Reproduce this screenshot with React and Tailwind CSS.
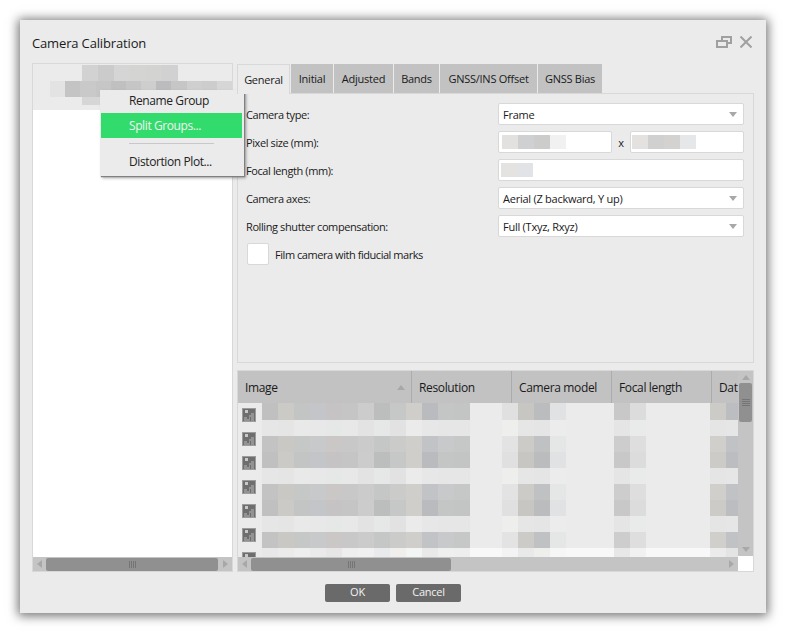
import React from 'react';

const fontStack = "font-['Open_Sans',sans-serif]";

// mosaic colours, one entry per 16px cell, null = blank
const darkA = ['#c0c0c0','#cbcac7','#c3c5c4','#c4c5c8','#c5c3c3','#c5c5c5','#cccccc','#bcbebd','#c6c7c7','#cfcecb','#babbbe','#c4c6c6','#c3c5c5',null,null,'#e0e0e0','#c8c6c3','#bbbcbe','#e0e2e4',null,null,null,'#c8c8c8','#dcdcdc',null,null,null,null,'#cccbc8','#bbbdc0'];
const darkB = ['#c3c3c3','#cac8c5','#c6c8c7','#c8c9cb','#cbc7c7','#c8c8c8','#cbcbcb','#c5c7c6','#cbcbc9','#cfcecb','#c2c3c6','#c7c9ca','#c6c8c8',null,null,'#e3e3e3','#cdcbc8','#bfc1c3','#e5e7e7',null,null,null,'#cdcdcd','#dedede',null,null,null,null,'#d0cfcc','#c0c2c5'];
const light = ['#e6e6e6','#e5e5e5','#e9e9e9','#e8e8e8','#e6e8e8','#e8e8e8','#e3e3e3','#e6e8e8','#e2e2e2','#ebebeb','#e7e7e7','#e6e6e6','#e6e6e6',null,null,'#eeeeec','#e6e6e6','#e5e5e5','#ececec',null,null,null,'#e5e5e5','#e9ebeb',null,null,null,null,'#e5e5e5','#e6e6e6'];
const lastRow = ['#e8e8e8','#ebebeb','#eeeeee','#eaeaea','#e6e6e6','#eeeeee','#f0f0f0','#e8eaec','#f0efed','#f2f5f3','#e9e9e9','#efefef','#eeeeee',null,null,'#f3f3f3','#e9e9e9','#eeeeec','#f6f6f6',null,null,null,'#e7e7e7','#f1f1f1',null,null,null,null,'#ebebeb','#e4e4e4'];

const rows = [
  [darkA, 17], [light, 16], [darkB, 16], [darkA, 16], [light, 16],
  [darkB, 16], [darkA, 16], [light, 16], [darkB, 16], [lastRow, 9],
];

function Arrow({ dir, className = '' }) {
  const pts = { up: '0,5 4,0 8,5', down: '0,0 8,0 4,5', left: '5,0 5,8 0,4', right: '0,0 0,8 5,4' }[dir];
  const vertical = dir === 'up' || dir === 'down';
  return (
    <svg width={vertical ? 8 : 5} height={vertical ? 5 : 8} className={className}>
      <polygon points={pts} fill="#a8a8a8" />
    </svg>
  );
}

function Grip({ vertical }) {
  return (
    <div className={vertical ? 'flex flex-col gap-[1px]' : 'flex gap-[1px]'}>
      {[0, 1, 2, 3].map((i) => (
        <div key={i} className={vertical ? 'w-[8px] h-[1px] bg-[#757575]' : 'w-[1px] h-[7px] bg-[#757575]'} />
      ))}
    </div>
  );
}

function ImageIcon() {
  return (
    <svg width="14" height="14" viewBox="0 0 14 14" className="block">
      <rect width="14" height="14" fill="#9c9c9c" />
      <rect x="1" y="1" width="12" height="12" fill="#6e6e6e" />
      <rect x="3" y="2" width="3" height="3" fill="#c8c8c8" />
      <path d="M2 13 V9 H5 V11 H7 V7 H9 V5 H12 V13 H9 V9 H8 V13 Z" fill="#939393" />
    </svg>
  );
}

function Select({ value }) {
  return (
    <div className="w-[246px] h-[22px] bg-white border border-[#d8d8d8] rounded-[2px] flex items-center justify-between pl-[4px] pr-[6px]">
      <span className="pt-[2px]">{value}</span>
      <Arrow dir="down" />
    </div>
  );
}

function Blur({ cells, pad = 'pl-[3px]' }) {
  return (
    <div className={`${pad} flex`}>
      {cells.map((c, i) => (
        <div key={i} className="w-[16px] h-[14px]" style={{ backgroundColor: c }} />
      ))}
    </div>
  );
}

function FormRow({ label, children }) {
  return (
    <div className="flex items-center h-[22px]">
      <div className="w-[252px] shrink-0 pt-[2px] tracking-[-0.4px]">{label}</div>
      {children}
    </div>
  );
}

function ContextMenu() {
  return (
    <div className="absolute left-[67px] top-[26px] w-[144px] h-[86px] bg-[#ebebeb] text-[#222] text-[12px] tracking-[-0.4px] shadow-[1px_1px_1px_#808080,2px_2px_3px_rgba(0,0,0,0.35)] pl-[1px] pr-[2px]">
      <div className="h-[23px] pl-[28px] pb-[2px] flex items-center">Rename Group</div>
      <div className="h-[25px] pl-[28px] pt-[1px] flex items-center bg-[#32dc6c] text-[#f2f2f2]">Split Groups...</div>
      <div className="h-[10px] flex items-center pl-[28px]"><div className="w-[85px] h-[1px] bg-[#c8c8c8]" /></div>
      <div className="h-[25px] pl-[28px] pt-[3px] flex items-center">Distortion Plot...</div>
    </div>
  );
}

const tabs = [
  ['General', 'w-[53px]'],
  ['Initial', 'w-[42px]'],
  ['Adjusted', 'w-[59px]'],
  ['Bands', 'w-[45px]'],
  ['GNSS/INS Offset', 'w-[97px]'],
  ['GNSS Bias', 'w-[64px]'],
];

const columns = [
  ['Image', 'w-[174px]'],
  ['Resolution', 'w-[100px]'],
  ['Camera model', 'w-[100px]'],
  ['Focal length', 'w-[100px]'],
  ['Dat', 'w-[26px]'],
];

export default function App() {
  return (
    <div className={`w-[786px] h-[632px] bg-white pt-[20px] pl-[20px] overflow-hidden text-[11px] tracking-[-0.25px] text-[#1a1a1a] ${fontStack}`}>
      <div className="w-[746px] h-[593px] bg-[#ebebeb] flex flex-col shadow-[0_1px_10px_2px_rgba(0,0,0,0.55)]">
        {/* title bar */}
        <div className="h-[43px] shrink-0 flex items-center justify-between pl-[12px] pr-[14px] pt-[3px]">
          <span className="text-[13px] tracking-[-0.15px] pt-[2px]">Camera Calibration</span>
          <div className="flex items-center gap-[8px] -mt-[2px]">
            <svg width="16" height="12" viewBox="0 0 16 12" fill="none" stroke="#a0a0a0" strokeWidth="2">
              <rect x="1" y="5" width="10" height="6" />
              <path d="M6 4 V1 H15 V7 H12" />
            </svg>
            <svg width="12" height="12" viewBox="0 0 12 12" stroke="#a0a0a0" strokeWidth="2">
              <path d="M0.5 0.5 L11.5 11.5 M11.5 0.5 L0.5 11.5" />
            </svg>
          </div>
        </div>

        <div className="flex gap-[4px] pl-[12px] h-[509px] shrink-0">
          {/* group list */}
          <div className="relative w-[201px] border border-[#d8d8d8] flex flex-col">
            <div className="h-[46px] shrink-0 bg-[#ebebeb] pt-[1px] overflow-hidden">
              <div className="flex pl-[49px]">
                {['#d2d2d2','#cbcbcb','#d4d5d4','#d4d4d2','#d3d3d1','#d1d1d1'].map((c, i) => (
                  <div key={i} className="w-[16px] h-[16px]" style={{ backgroundColor: c }} />
                ))}
              </div>
              <div className="flex pl-[17px]">
                {['#e3e3e3','#c4c4c4','#c9c9c9','#c6c6c6','#c0c0c0','#c6c6c6','#cecece','#bcbcbf','#c6c6c6','#cfcfcf','#cdcdcd','#d6d6d6'].map((c, i) => (
                  <div key={i} className="w-[16px] h-[16px]" style={{ backgroundColor: c }} />
                ))}
              </div>
              <div className="flex pl-[49px]">
                {['#d6d6d6','#d8d8d8','#dddddd'].map((c, i) => (
                  <div key={i} className="w-[16px] h-[8px]" style={{ backgroundColor: c }} />
                ))}
              </div>
            </div>
            <div className="flex-1 bg-white" />
            <div className="h-[14px] shrink-0 bg-[#c4c4c4] flex items-center pl-[4px]">
              <Arrow dir="left" />
              <div className="ml-[4px] w-[172px] h-[13px] bg-[#909090] rounded-[2px] flex items-center justify-center"><Grip /></div>
              <Arrow dir="right" className="ml-[5px]" />
            </div>
            <ContextMenu />
          </div>

          <div className="w-[517px] flex flex-col">
            {/* tabs */}
            <div className="flex h-[30px] shrink-0 gap-[1px] pt-[1px]">
              {tabs.map(([t, w], i) => (
                <div
                  key={t}
                  className={i === 0
                    ? `${w} pt-[2px] flex items-center justify-center bg-[#ebebeb] border border-b-0 border-[#d8d8d8] -mb-[1px] relative z-10`
                    : `${w} pt-[2px] flex items-center justify-center bg-[#c2c2c2]`}
                >
                  {t}
                </div>
              ))}
            </div>
            {/* general panel */}
            <div className="h-[270px] shrink-0 border border-[#d8d8d8] pl-[8px] pt-[9px] flex flex-col gap-[6px]">
              <FormRow label="Camera type:"><Select value="Frame" /></FormRow>
              <FormRow label="Pixel size (mm):">
                <div className="w-[114px] h-[22px] bg-white border border-[#d8d8d8] rounded-[2px] flex items-center">
                  <Blur cells={['#e2e1df','#cfd0d1','#cccdcb','#f1f1f1']} />
                </div>
                <div className="w-[18px] text-center pt-[2px]">x</div>
                <div className="w-[114px] h-[22px] bg-white border border-[#d8d8d8] rounded-[2px] flex items-center">
                  <Blur cells={['#e3e2e0','#cfd0cf','#d3d2d0','#e6e7e9']} pad="pl-[1px]" />
                </div>
              </FormRow>
              <FormRow label="Focal length (mm):">
                <div className="w-[246px] h-[22px] bg-white border border-[#d8d8d8] rounded-[2px] flex items-center">
                  <Blur cells={['#e4e3e1','#e2e3e6']} pad="pl-[2px]" />
                </div>
              </FormRow>
              <FormRow label="Camera axes:"><Select value="Aerial (Z backward, Y up)" /></FormRow>
              <FormRow label="Rolling shutter compensation:"><Select value="Full (Txyz, Rxyz)" /></FormRow>
              <label className="flex items-center h-[22px] gap-[6px] pl-[1px]">
                <div className="w-[22px] h-[22px] bg-white border border-[#d8d8d8] rounded-[2px]" />
                <span className="pt-[2px] tracking-[-0.45px]">Film camera with fiducial marks</span>
              </label>
            </div>

            {/* image table */}
            <div className="mt-[7px] h-[202px] shrink-0 border border-[#d8d8d8] flex">
              <div className="w-[500px] shrink-0 flex flex-col">
                <div className="h-[32px] shrink-0 flex bg-[#c2c2c2] text-[12px] tracking-[-0.35px]">
                  {columns.map(([c, w], i) => (
                    <div key={c} className={`${w} shrink-0 flex items-center justify-between pl-[7px] pr-[6px] ${i < 4 ? 'border-r border-[#acacac]' : ''}`}>
                      <span className="pt-[2px]">{c}</span>
                      {i === 0 && <Arrow dir="up" />}
                    </div>
                  ))}
                </div>
                <div className="flex-1 relative overflow-hidden bg-[#ebebeb]">
                  {rows.map(([cells, h], r) => (
                    <div key={r} className="flex pl-[24px]" style={{ height: h }}>
                      {cells.map((c, i) => (
                        <div key={i} className="w-[16px] shrink-0" style={{ backgroundColor: c || (h === 9 ? '#f8f8f8' : '#ebebeb') }} />
                      ))}
                    </div>
                  ))}
                  {/* thumbnails sit over the row mosaic */}
                  <div className="absolute left-[4px] top-[5px] flex flex-col gap-[10px]">
                    {[0, 1, 2, 3, 4, 5, 6].map((i) => <ImageIcon key={i} />)}
                  </div>
                </div>
                <div className="h-[14px] shrink-0 bg-[#c4c4c4] flex items-center pl-[4px] pr-[4px]">
                  <Arrow dir="left" />
                  <div className="ml-[4px] w-[200px] h-[13px] bg-[#909090] rounded-[2px] flex items-center justify-center"><Grip /></div>
                  <div className="flex-1" />
                  <Arrow dir="right" />
                </div>
              </div>
              <div className="w-[15px] shrink-0 flex flex-col bg-[#c4c4c4]">
                <div className="h-[12px] flex items-center justify-center"><Arrow dir="up" /></div>
                <div className="h-[39px] w-[13px] mx-auto bg-[#909090] rounded-[2px] flex items-center justify-center"><Grip vertical /></div>
                <div className="flex-1 flex items-end justify-center pb-[4px]"><Arrow dir="down" /></div>
                <div className="h-[15px] shrink-0 bg-white" />
              </div>
            </div>
          </div>
        </div>

        {/* footer */}
        <div className="flex-1 flex items-center justify-center gap-[6px]">
          <button className="w-[65px] h-[18px] bg-[#6a6a6a] rounded-[2px] text-[#f2f2f2]">OK</button>
          <button className="w-[65px] h-[18px] bg-[#6a6a6a] rounded-[2px] text-[#f2f2f2]">Cancel</button>
        </div>
      </div>
    </div>
  );
}
